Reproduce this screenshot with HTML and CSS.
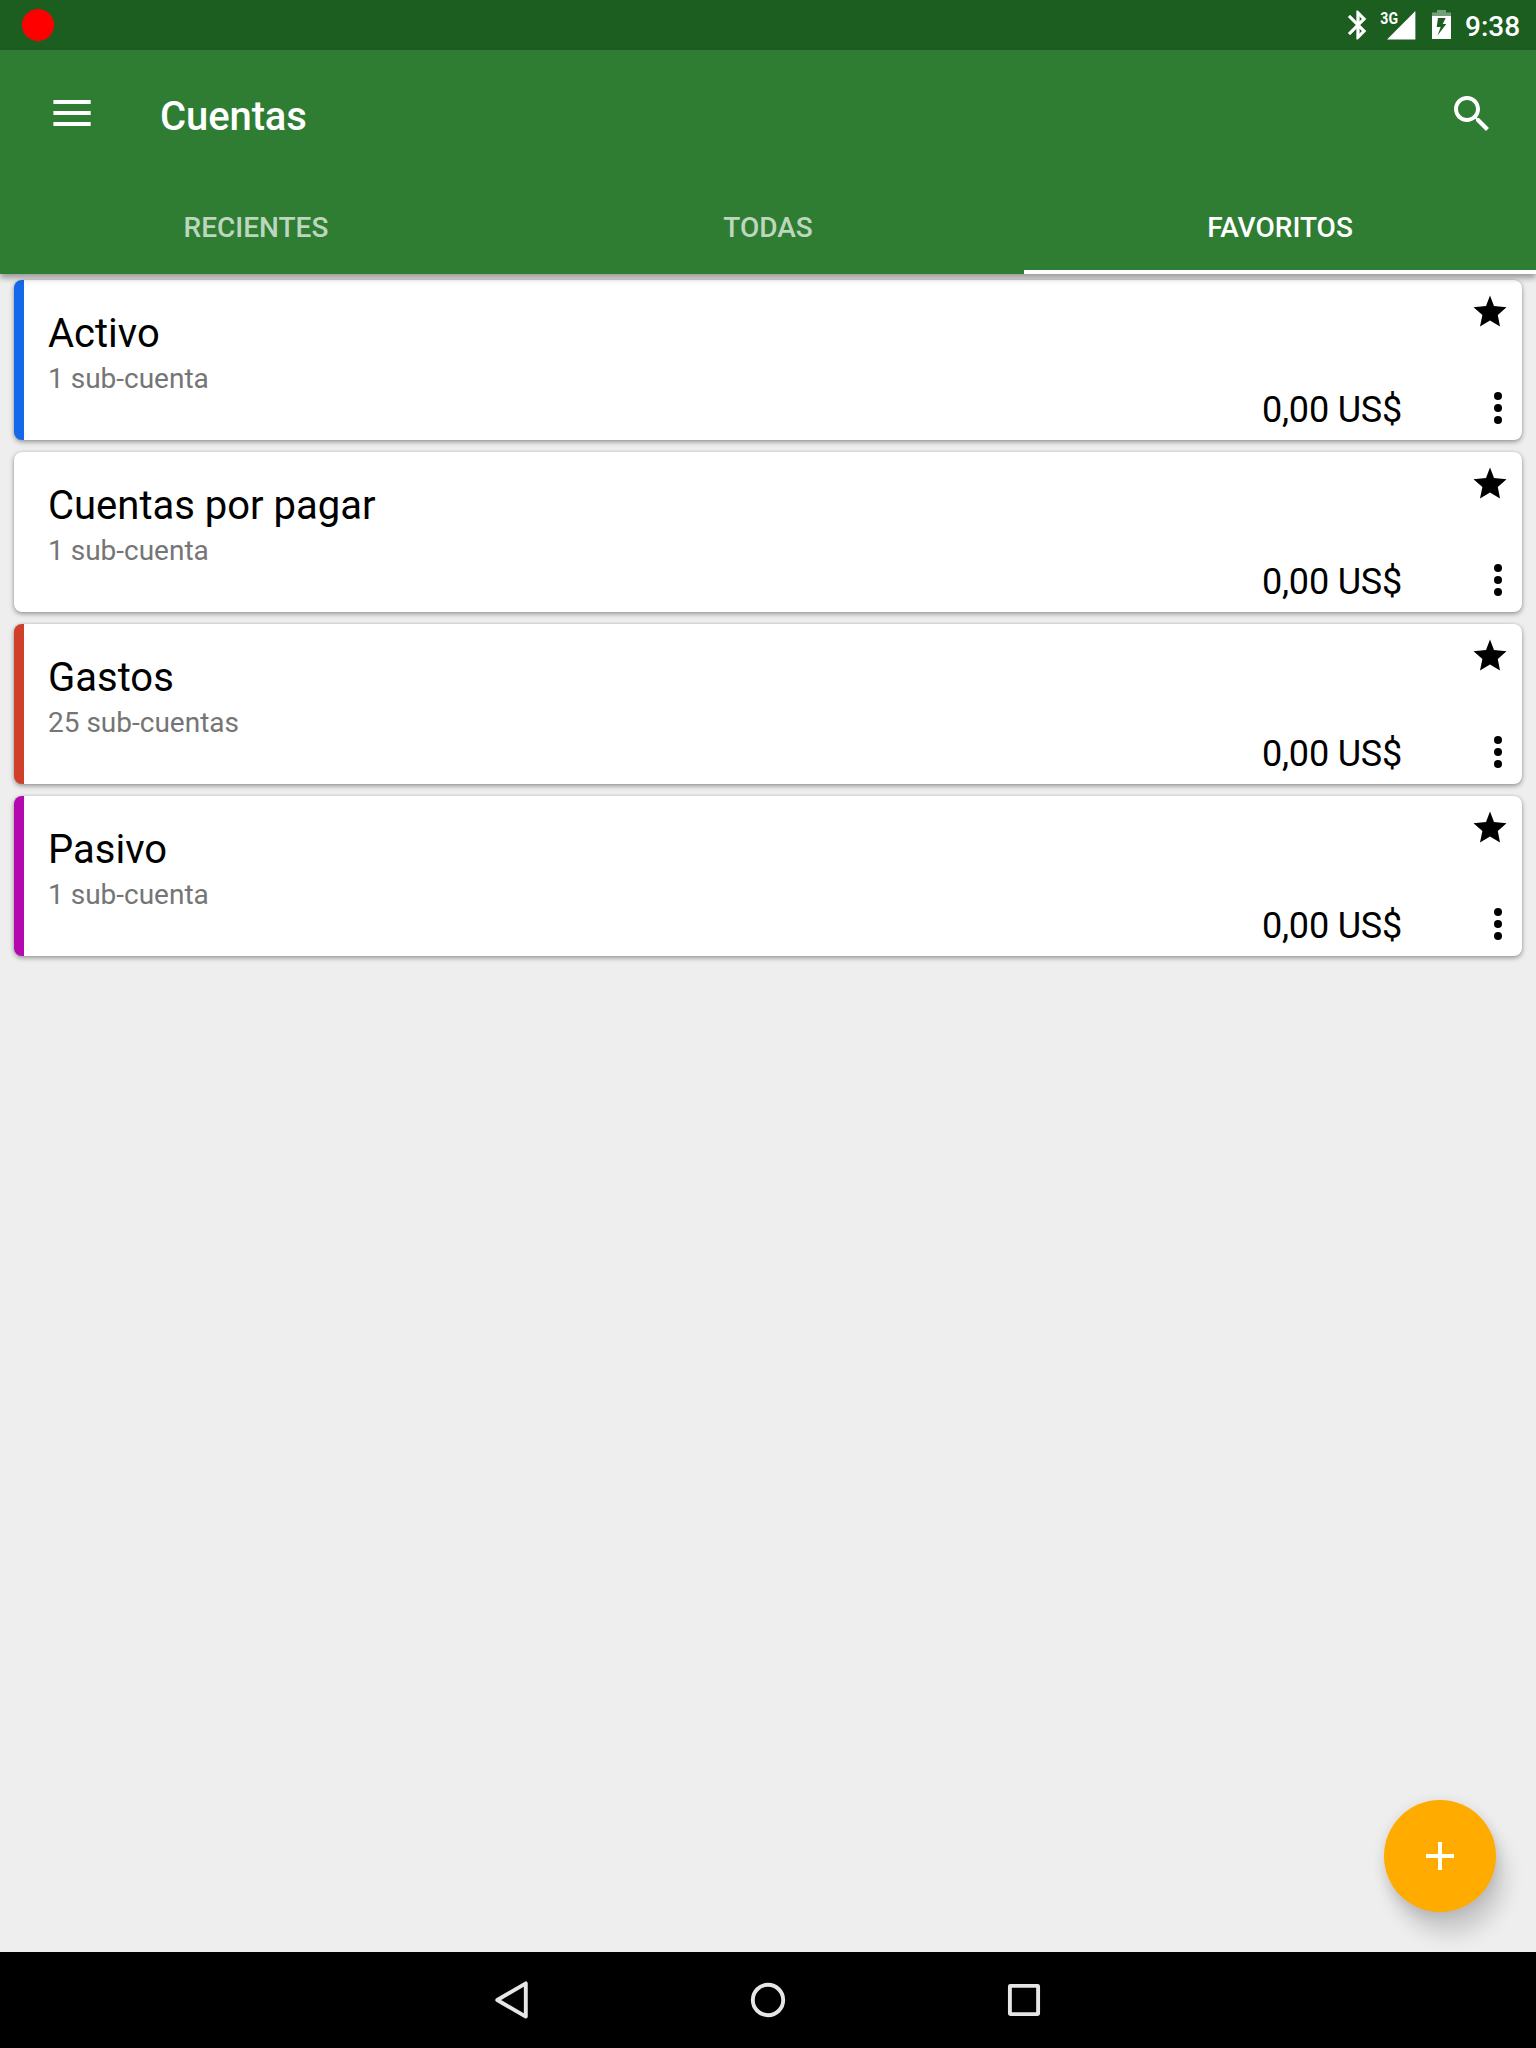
FILE: index.html
```html
<!DOCTYPE html>
<html lang="es">
<head>
<meta charset="utf-8">
<title>Cuentas</title>
<link rel="stylesheet" href="styles.css">
</head>
<body>
<svg class="sprite" aria-hidden="true">
  <symbol id="star" viewBox="0 0 34 32"><path d="M17 0.5 21 11 33.5 12.2 24.8 20 27 31.6 17 25.6 7 31.6 9.4 20 0.5 12.2 13 11Z"/></symbol>
  <symbol id="more" viewBox="0 0 8 32"><circle cx="4" cy="4" r="4"/><circle cx="4" cy="16" r="4"/><circle cx="4" cy="28" r="4"/></symbol>
</svg>
<div class="screen">
  <div class="status-bar">
    <span class="record-dot"></span>
    <svg class="status-icons" width="124" height="50" viewBox="1336 0 124 50">
      <path transform="translate(1341 8) scale(1.417)" stroke="#fff" stroke-width=".3" d="M17.71 7.71 12 2h-1v7.59L6.41 5 5 6.41 10.59 12 5 17.59 6.41 19 11 14.41V22h1l5.71-5.71-4.3-4.29 4.3-4.29zM13 5.83l1.88 1.88L13 9.59V5.83zm1.88 10.46L13 18.17v-3.76l1.88 1.88z"/>
      <path d="M1415.4 11v28.6H1387z"/>
      <text class="network" transform="translate(1380.3 24) scale(.83 1)">3G</text>
      <path class="battery-empty" d="M1437 10h9v2.500h5V16h-19v-3.500h5z"/>
      <path fill-rule="evenodd" d="M1432 16h19v23h-19zM1438 18l-1.300 9h4l-3.200 8.500 8.800-11.500h-3.600l3-6z"/>
    </svg>
    <span class="clock">9:38</span>
  </div>
  <header class="app-bar">
    <div class="toolbar">
      <svg class="menu" width="38" height="26" viewBox="0 0 38 26"><path d="M.4 0h37.300v4H.4zM.4 11h37.300v4H.4zM.4 22h37.300v4H.4z"/></svg>
      <h1 class="title">Cuentas</h1>
      <svg class="search" width="48" height="48" viewBox="0 0 24 24"><path d="M15.500 14h-.79l-.28-.27C15.410 12.590 16 11.110 16 9.500 16 5.910 13.090 3 9.500 3S3 5.910 3 9.500 5.910 16 9.500 16c1.610 0 3.090-.59 4.230-1.570l.27.28v.79l5 4.990L20.490 19l-4.990-5zm-6 0C7.010 14 5 11.990 5 9.500S7.010 5 9.500 5 14 7.010 14 9.500 11.990 14 9.500 14z"/></svg>
    </div>
    <nav class="tabs">
      <span class="tab">RECIENTES</span>
      <span class="tab">TODAS</span>
      <span class="tab active">FAVORITOS</span>
    </nav>
  </header>
  <main class="accounts">
    <article class="card blue">
      <div class="info"><h2 class="name">Activo</h2><p class="sub">1 sub-cuenta</p></div>
      <span class="amount">0,00 US$</span>
      <div class="actions"><svg class="star"><use href="#star"/></svg><svg class="more"><use href="#more"/></svg></div>
    </article>
    <article class="card">
      <div class="info"><h2 class="name">Cuentas por pagar</h2><p class="sub">1 sub-cuenta</p></div>
      <span class="amount">0,00 US$</span>
      <div class="actions"><svg class="star"><use href="#star"/></svg><svg class="more"><use href="#more"/></svg></div>
    </article>
    <article class="card red">
      <div class="info"><h2 class="name">Gastos</h2><p class="sub">25 sub-cuentas</p></div>
      <span class="amount">0,00 US$</span>
      <div class="actions"><svg class="star"><use href="#star"/></svg><svg class="more"><use href="#more"/></svg></div>
    </article>
    <article class="card purple">
      <div class="info"><h2 class="name">Pasivo</h2><p class="sub">1 sub-cuenta</p></div>
      <span class="amount">0,00 US$</span>
      <div class="actions"><svg class="star"><use href="#star"/></svg><svg class="more"><use href="#more"/></svg></div>
    </article>
    <div class="fab"><svg width="28" height="28" viewBox="0 0 28 28"><path d="M12 0h4v12h12v4H16v12h-4V16H0v-4h12z"/></svg></div>
  </main>
  <footer class="nav-bar">
    <svg width="40" height="40" viewBox="0 0 40 40"><path d="M33.800 3.400v33.200L5.300 20z"/></svg>
    <svg width="40" height="40" viewBox="0 0 40 40"><circle cx="20" cy="20" r="15.200"/></svg>
    <svg width="40" height="40" viewBox="0 0 40 40"><rect x="5.900" y="5.900" width="28.200" height="28.200" rx=".5"/></svg>
  </footer>
</div>
</body>
</html>
```
FILE: styles.css
```css
* { box-sizing: border-box; margin: 0; padding: 0; }
body { font-family: Roboto, "Liberation Sans", sans-serif; background: #eee; color: #000; }
svg { display: block; }
.sprite { display: none; }
.screen { width: 1536px; height: 2048px; display: flex; flex-direction: column; overflow: hidden; }

.status-bar { height: 50px; flex: none; background: #1b5e20; display: flex; align-items: center; padding: 0 16px 0 22px; }
.record-dot { width: 32px; height: 32px; border-radius: 50%; background: #f00; margin-right: auto; }
.status-icons { fill: #fff; margin-right: 5px; }
.network { font-size: 17px; font-weight: 700; }
.battery-empty { opacity: .4; }
.clock { width: 55px; color: #fff; font-size: 28px; font-weight: 500; line-height: 32px; padding-top: 3px; white-space: nowrap; }

.app-bar { height: 224px; flex: none; background: #2e7d32; color: #fff; position: relative; z-index: 1; box-shadow: 0 4px 6px rgba(0,0,0,.36); }
.toolbar { height: 128px; display: flex; align-items: center; padding: 0 40px 0 53px; }
.menu { fill: #fff; margin-bottom: 2px; }
.title { margin-left: 69px; padding-top: 6px; font-size: 40px; line-height: 48px; font-weight: 500; letter-spacing: -.1px; }
.search { fill: #fff; margin-left: auto; }
.tabs { height: 96px; display: grid; grid-template-columns: repeat(3, 1fr); }
.tab { display: flex; align-items: center; justify-content: center; padding-top: 6px; font-size: 28px; font-weight: 500; color: rgba(255,255,255,.7); border-bottom: 4px solid transparent; }
.tab.active { color: #fff; border-color: #fff; }

.accounts { flex: 1; position: relative; padding: 6px 14px; display: flex; flex-direction: column; gap: 12px; }
.card { height: 160px; flex: none; display: flex; background: #fff; border-radius: 8px; border-left: 10px solid #fff; overflow: hidden; padding-left: 24px; box-shadow: 0 2px 5px rgba(0,0,0,.36), 0 0 2px rgba(0,0,0,.16); }
.blue { border-left-color: #1469eb; }
.red { border-left-color: #d03f2a; }
.purple { border-left-color: #b309af; }
.info { flex: 1; padding-top: 30px; }
.name { font-size: 40px; line-height: 48px; font-weight: 400; }
.sub { font-size: 28px; line-height: 34px; color: #757575; margin-top: 4px; }
.amount { align-self: flex-end; font-size: 36px; line-height: 42px; padding-bottom: 9px; letter-spacing: -.2px; }
.actions { width: 120px; display: flex; flex-direction: column; align-items: flex-end; justify-content: space-between; padding: 15px 15px 16px 0; }
.star { width: 34px; height: 32px; }
.more { width: 8px; height: 32px; margin-right: 5px; }

.fab { position: absolute; right: 40px; bottom: 40px; width: 112px; height: 112px; border-radius: 50%; background: #ffab00; display: flex; align-items: center; justify-content: center; box-shadow: 9px 22px 20px rgba(0,0,0,.15), 0 3px 14px rgba(0,0,0,.13); }
.fab svg { fill: #fff; }

.nav-bar { height: 96px; flex: none; background: #000; display: flex; justify-content: center; align-items: center; gap: 216px; position: relative; }
.nav-bar svg { fill: none; stroke: #e6e6e6; stroke-width: 3.9; stroke-linejoin: round; }
```
